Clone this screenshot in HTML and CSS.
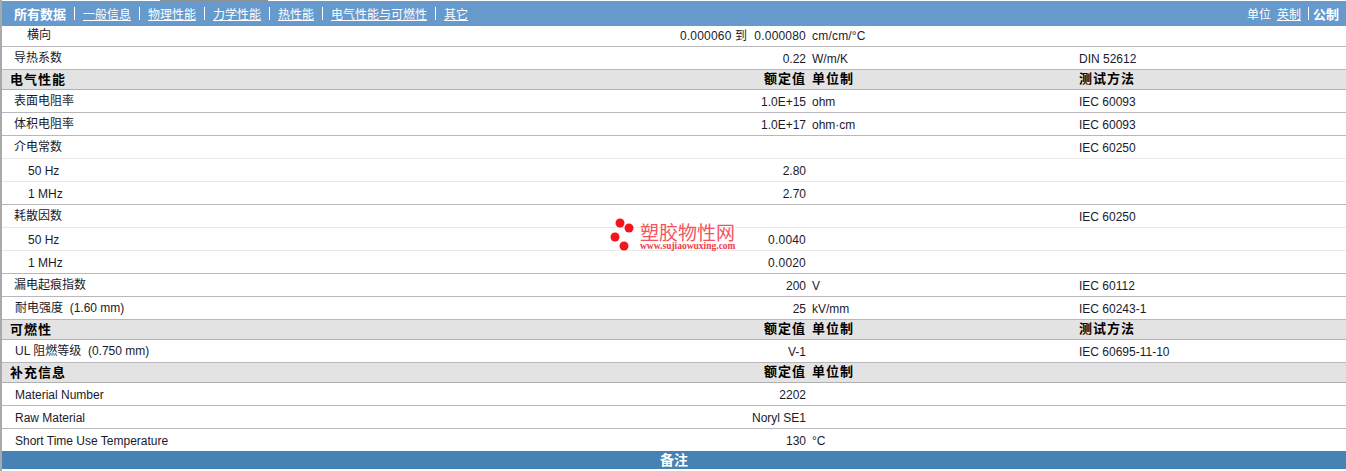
FILE: index.html
```html
<!DOCTYPE html>
<html lang="zh">
<head>
<meta charset="utf-8">
<title>所有数据</title>
<link rel="stylesheet" href="styles.css">
</head>
<body>
<div class="page">
  <div class="top-edge"><span class="top-tab"></span></div>
  <nav class="nav">
    <div class="nav-links">
      <b class="nav-current">所有数据</b><i class="sep"></i>
      <a href="#">一般信息</a><i class="sep"></i>
      <a href="#">物理性能</a><i class="sep"></i>
      <a href="#">力学性能</a><i class="sep"></i>
      <a href="#">热性能</a><i class="sep"></i>
      <a href="#">电气性能与可燃性</a><i class="sep"></i>
      <a href="#">其它</a>
    </div>
    <div class="nav-units">
      <span>单位</span><a href="#">英制</a><i class="sep small"></i><b class="nav-current">公制</b>
    </div>
  </nav>

  <div class="row h20 first"><span class="label sub cjk">横向</span><span class="val wide">0.000060 到&nbsp; 0.000080</span><span class="wide">cm/cm/°C</span><span></span></div>
  <div class="row h23"><span class="label cjk">导热系数</span><span class="val">0.22</span><span>W/m/K</span><span>DIN 52612</span></div>
  <div class="row head"><span class="title">电气性能</span><span class="val">额定值</span><span>单位制</span><span>测试方法</span></div>
  <div class="row h23"><span class="label cjk">表面电阻率</span><span class="val">1.0E+15</span><span>ohm</span><span>IEC 60093</span></div>
  <div class="row h23"><span class="label cjk">体积电阻率</span><span class="val">1.0E+17</span><span>ohm·cm</span><span>IEC 60093</span></div>
  <div class="row h23 light"><span class="label cjk">介电常数</span><span class="val"></span><span></span><span>IEC 60250</span></div>
  <div class="row h23 light"><span class="label sub">50 Hz</span><span class="val">2.80</span><span></span><span></span></div>
  <div class="row h23"><span class="label sub">1 MHz</span><span class="val">2.70</span><span></span><span></span></div>
  <div class="row h23 light"><span class="label cjk">耗散因数</span><span class="val"></span><span></span><span>IEC 60250</span></div>
  <div class="row h23 light"><span class="label sub">50 Hz</span><span class="val wide">0.0040</span><span></span><span></span></div>
  <div class="row h23"><span class="label sub">1 MHz</span><span class="val wide">0.0020</span><span></span><span></span></div>
  <div class="row h23"><span class="label cjk">漏电起痕指数</span><span class="val">200</span><span>V</span><span>IEC 60112</span></div>
  <div class="row h23"><span class="label mix">耐电强度&nbsp; (1.60 mm)</span><span class="val">25</span><span>kV/mm</span><span>IEC 60243-1</span></div>
  <div class="row head"><span class="title">可燃性</span><span class="val">额定值</span><span>单位制</span><span>测试方法</span></div>
  <div class="row h23"><span class="label mix">UL 阻燃等级&nbsp; (0.750 mm)</span><span class="val">V-1</span><span></span><span>IEC 60695-11-10</span></div>
  <div class="row head"><span class="title">补充信息</span><span class="val">额定值</span><span>单位制</span><span></span></div>
  <div class="row h23"><span class="label">Material Number</span><span class="val">2202</span><span></span><span></span></div>
  <div class="row h23"><span class="label">Raw Material</span><span class="val">Noryl SE1</span><span></span><span></span></div>
  <div class="row h22"><span class="label">Short Time Use Temperature</span><span class="val">130</span><span>°C</span><span></span></div>

  <div class="notes">备注</div>

  <div class="logo">
    <svg class="logo-dots" width="24" height="34" viewBox="0 0 24 34" aria-hidden="true">
      <circle cx="10" cy="5" r="4.5" fill="#f4141c"/>
      <circle cx="19" cy="10" r="4.5" fill="#f4141c"/>
      <circle cx="5" cy="19" r="4.5" fill="#f4141c"/>
      <circle cx="14" cy="28" r="4.5" fill="#f4141c"/>
    </svg>
    <div class="logo-text">
      <div class="logo-cn">塑胶物性网</div>
      <div class="logo-url">www.sujiaowuxing.com</div>
    </div>
  </div>
</div>
</body>
</html>
```

FILE: styles.css
```css
* { box-sizing: border-box; }

html, body {
  margin: 0;
  padding: 0;
  background: #fff;
}

.page {
  position: relative;
  width: 1346px;
  height: 471px;
  overflow: hidden;
  border-left: 2px solid #a9a9a9;
  font-family: "Liberation Sans", "Noto Sans CJK SC", sans-serif;
  font-size: 12px;
  color: #1a1a2a;
}

.top-edge {
  height: 1px;
  background: #fff;
}

.top-tab {
  display: block;
  width: 108px;
  height: 1px;
  margin-left: 158px;
  background: #8f8f8f;
}

.nav {
  display: flex;
  justify-content: space-between;
  align-items: center;
  height: 25px;
  padding: 0 7px 0 12px;
  background: #6699cc;
  color: #fff;
  font-size: 12px;
}

.nav a {
  color: #fff;
  text-decoration: underline;
}

.nav-links,
.nav-units {
  display: flex;
  align-items: center;
}

.nav-current {
  font-size: 13px;
}

.sep {
  display: block;
  width: 1px;
  height: 13px;
  margin: 0 8px;
  background: #fff;
}

.sep.small {
  margin: 0 4px 0 7px;
}

.nav-units a {
  margin-left: 6px;
}

.row {
  display: grid;
  grid-template-columns: 804px 6px 267px 1fr;
  align-items: center;
  padding-top: 2px;
  border-bottom: 1px solid #b9b7bc;
  line-height: 14px;
  white-space: nowrap;
}

.row > span:nth-child(1),
.row > span:nth-child(2) {
  grid-column: 1;
  grid-row: 1;
}

.row > span:nth-child(2) {
  justify-self: end;
}

.row > span:nth-child(3) {
  grid-column: 3;
  grid-row: 1;
}

.row > span:nth-child(4) {
  grid-column: 4;
  grid-row: 1;
}

.h20 { height: 21px; }
.h22 { height: 22px; border-bottom: 0; }
.h23 { height: 23px; }

.first {
  padding-top: 0;
}

.light {
  border-bottom-color: #e8e8e8;
}

.label {
  padding-left: 13px;
}

.label.sub {
  padding-left: 26px;
}

.label.cjk {
  padding-left: 12px;
  padding-bottom: 2px;
}

.label.sub.cjk {
  padding-left: 25px;
  padding-bottom: 2px;
}

.label.mix {
  padding-bottom: 2px;
}

.wide {
  letter-spacing: 0.2px;
}

.head {
  height: 20px;
  padding-top: 0;
  padding-bottom: 2px;
  background: #e4e3e3;
  border-bottom-color: #b0b0b0;
  color: #000;
  font-size: 13px;
  font-weight: 700;
  letter-spacing: 1px;
}

.title {
  padding-left: 8px;
  padding-top: 2px;
}

.notes {
  height: 18px;
  background: #4682b4;
  color: #fff;
  font-size: 14px;
  font-weight: 700;
  line-height: 18px;
  text-align: center;
}

.logo {
  position: absolute;
  left: 608px;
  top: 218px;
  display: flex;
  gap: 6px;
}

.logo-cn {
  margin-top: 8px;
  color: #f25560;
  font-size: 19px;
  line-height: 16px;
}

.logo-url {
  color: #f0404a;
  font-family: "Liberation Serif", serif;
  font-size: 9.5px;
  font-weight: 700;
  line-height: 9px;
}
```
